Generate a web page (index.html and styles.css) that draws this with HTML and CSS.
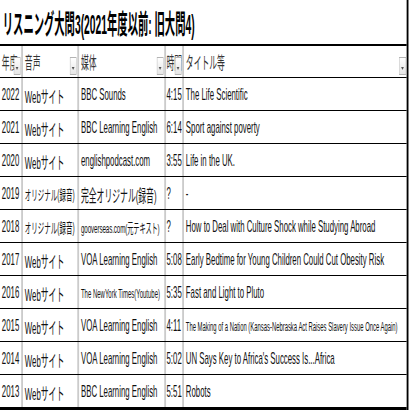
FILE: index.html
```html
<!DOCTYPE html>
<html lang="ja">
<head>
<meta charset="utf-8">
<title>リスニング大問3</title>
<link rel="stylesheet" href="styles.css">
</head>
<body>
<div class="page">
<div class="sheet">
  <div class="title"><span class="title-text">リスニング大問3(2021年度以前: 旧大問4)</span></div>
  <div class="table">
    <div class="row head">
      <div class="cell"><span class="txt">年度</span><span class="filter"></span></div>
      <div class="cell"><span class="txt">音声</span><span class="filter"></span></div>
      <div class="cell"><span class="txt">媒体</span><span class="filter"></span></div>
      <div class="cell time"><span class="txt">時間</span><span class="filter"></span></div>
      <div class="cell last"><span class="txt">タイトル等</span><span class="filter"></span></div>
    </div>
    <div class="row">
      <div class="cell">2022</div><div class="cell">Webサイト</div><div class="cell">BBC Sounds</div><div class="cell time">4:15</div><div class="cell last">The Life Scientific</div>
    </div>
    <div class="row">
      <div class="cell">2021</div><div class="cell">Webサイト</div><div class="cell">BBC Learning English</div><div class="cell time">6:14</div><div class="cell last">Sport against poverty</div>
    </div>
    <div class="row">
      <div class="cell">2020</div><div class="cell">Webサイト</div><div class="cell">englishpodcast.com</div><div class="cell time">3:55</div><div class="cell last">Life in the UK.</div>
    </div>
    <div class="row">
      <div class="cell">2019</div><div class="cell small">オリジナル(録音)</div><div class="cell">完全オリジナル(録音)</div><div class="cell time">?</div><div class="cell last">-</div>
    </div>
    <div class="row">
      <div class="cell">2018</div><div class="cell small">オリジナル(録音)</div><div class="cell xsmall">gooverseas.com(元テキスト)</div><div class="cell time">?</div><div class="cell last">How to Deal with Culture Shock while Studying Abroad</div>
    </div>
    <div class="row">
      <div class="cell">2017</div><div class="cell">Webサイト</div><div class="cell">VOA Learning English</div><div class="cell time">5:08</div><div class="cell last">Early Bedtime for Young Children Could Cut Obesity Risk</div>
    </div>
    <div class="row">
      <div class="cell">2016</div><div class="cell">Webサイト</div><div class="cell xxsmall">The NewYork Times(Youtube)</div><div class="cell time">5:35</div><div class="cell last">Fast and Light to Pluto</div>
    </div>
    <div class="row">
      <div class="cell">2015</div><div class="cell">Webサイト</div><div class="cell">VOA Learning English</div><div class="cell time">4:11</div><div class="cell last tiny">The Making of a Nation (Kansas-Nebraska Act Raises Slavery Issue Once Again)</div>
    </div>
    <div class="row">
      <div class="cell">2014</div><div class="cell">Webサイト</div><div class="cell">VOA Learning English</div><div class="cell time">5:02</div><div class="cell last">UN Says Key to Africa's Success Is...Africa</div>
    </div>
    <div class="row end">
      <div class="cell">2013</div><div class="cell">Webサイト</div><div class="cell">BBC Learning English</div><div class="cell time">5:51</div><div class="cell last">Robots</div>
    </div>
  </div>
</div>
</div>
</body>
</html>
```

FILE: styles.css
```css
html, body {
  margin: 0;
  padding: 0;
  background: #fff;
  overflow: hidden;
}

.page {
  width: 410px;
  height: 410px;
  overflow: hidden;
}

.sheet {
  width: 884px;
  height: 410px;
  border-right: 4px solid #000;
  transform: scaleX(0.46);
  transform-origin: 0 0;
  font-family: "Liberation Sans", "Noto Sans CJK JP", sans-serif;
  color: #111;
}

.title {
  height: 44px;
  box-sizing: border-box;
  padding-left: 6px;
  display: flex;
  align-items: center;
  white-space: nowrap;
}

.title-text {
  display: inline-block;
  font-size: 27px;
  font-weight: bold;
  color: #000;
  transform: scaleX(0.83);
  transform-origin: 0 50%;
}

.table {
  border-top: 2px solid #000;
}

.row {
  display: grid;
  grid-template-columns: 50px 122px 189px 39px 1fr;
  height: 32px;
  border-bottom: 1px solid #000;
}

.row.head {
  height: 31px;
}

.row.end {
  border-bottom: 3px solid #000;
}

.cell {
  position: relative;
  box-sizing: border-box;
  border-right: 4px solid #cbcbcb;
  padding-left: 4px;
  display: flex;
  align-items: center;
  padding-top: 2px;
  white-space: nowrap;
  overflow: hidden;
  font-size: 17px;
}

.cell.time {
  padding-left: 1px;
}

.cell.last {
  border-right: none;
}

.head .cell {
  color: #333;
  padding-top: 0;
}

.small { font-size: 14.1px; }
.xsmall { font-size: 13.5px; letter-spacing: -0.2px; }
.xxsmall { font-size: 13px; }
.tiny { font-size: 12.8px; }

.filter {
  position: absolute;
  right: 1px;
  bottom: 2px;
  width: 13px;
  height: 16px;
  border: 1px solid #b4b4b4;
  background: linear-gradient(#ffffff, #e6e6e6);
}

.filter::after {
  content: "";
  position: absolute;
  left: 3px;
  bottom: 4px;
  border-left: 3px solid transparent;
  border-right: 3px solid transparent;
  border-top: 3px solid #555;
}
```
